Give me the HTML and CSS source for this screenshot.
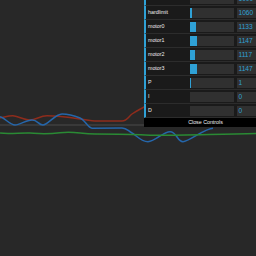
FILE: index.html
```html
<!DOCTYPE html>
<html lang="en">
<head>
    <meta charset="UTF-8">
    <meta name="viewport" content="width=device-width, initial-scale=1.0">
    <title>Motor Tuning</title>
    <link rel="stylesheet" href="styles.css">
</head>
<body>
    <svg class="plot" width="256" height="256" viewBox="0 0 256 256">
        <line x1="0" y1="125" x2="144" y2="125" class="axis"/>
        <path class="trace red" d="M0,118 C5,117 9,115.5 13,115.7 S24,120 30,120 S40,115.7 47,115.7 S70,117.5 80,119 S92,121 97,121 L122,121 C127,121 129,116 132,114 S140,109 150,104"/>
        <path class="trace blue" d="M0,116.7 C5,118 10,125 15,125 S26,120 32,120 S38,125 43,125 S55,114 62,114 S75,116 80,118 S88,128 92,128.3 L122,128 C127,128 128,131 132,133 S141,141.7 148,141.7 S163,131.7 170,131.7 S177,141.7 183,141.7 S205,128.3 213,128.3"/>
        <path class="trace green" d="M0,133 C8,134.5 22,132.5 30,133 S45,134.5 60,132.7 S80,134 95,134 S130,134 145,135 S200,134.5 256,133.5"/>
    </svg>

    <div class="gui">
        <ul class="rows">
            <li class="cr"><span class="name">limit</span><div class="slider"><div class="fg" style="width:0%"></div></div><div class="value">1000</div></li>
            <li class="cr"><span class="name">hardlimit</span><div class="slider"><div class="fg" style="width:6%"></div></div><div class="value">1060</div></li>
            <li class="cr"><span class="name">motor0</span><div class="slider"><div class="fg" style="width:14%"></div></div><div class="value">1133</div></li>
            <li class="cr"><span class="name">motor1</span><div class="slider"><div class="fg" style="width:16%"></div></div><div class="value">1147</div></li>
            <li class="cr"><span class="name">motor2</span><div class="slider"><div class="fg" style="width:12%"></div></div><div class="value">1117</div></li>
            <li class="cr"><span class="name">motor3</span><div class="slider"><div class="fg" style="width:16%"></div></div><div class="value">1147</div></li>
            <li class="cr"><span class="name">P</span><div class="slider"><div class="fg" style="width:2%"></div></div><div class="value">1</div></li>
            <li class="cr"><span class="name">I</span><div class="slider"><div class="fg" style="width:0%"></div></div><div class="value">0</div></li>
            <li class="cr"><span class="name">D</span><div class="slider"><div class="fg" style="width:0%"></div></div><div class="value">0</div></li>
        </ul>
        <div class="close-button">Close Controls</div>
    </div>
</body>
</html>
```

FILE: styles.css
```css
body {
    margin: 0;
    padding: 0;
    background-color: #282828;
    font-family: "Liberation Sans", Arial, sans-serif;
    overflow: hidden;
}
.plot {
    display: block;
}
.axis {
    stroke: #4a4a4a;
    stroke-width: 1;
}
.trace {
    fill: none;
    stroke-width: 1.5;
}
.red {
    stroke: #8e2c1c;
}
.blue {
    stroke: #2566aa;
}
.green {
    stroke: #2a8a34;
}
.gui {
    position: absolute;
    top: -8px;
    left: 144px;
    width: 123px;
    font-size: 5.3px;
    color: #eee;
}
.rows {
    list-style: none;
    margin: 0;
    padding: 0;
}
.cr {
    display: flex;
    align-items: flex-start;
    height: 13px;
    border-bottom: 1px solid #2c2c2c;
    border-left: 2px solid #2fa1d6;
    background: #1a1a1a;
}
.name {
    width: 44px;
    padding-left: 2px;
    line-height: 13px;
}
.slider {
    width: 46px;
    height: 10px;
    margin-top: 2px;
    background: #303030;
}
.fg {
    height: 100%;
    background: #2fa1d6;
}
.value {
    width: 30px;
    height: 10px;
    margin-top: 2px;
    margin-left: 3px;
    padding-left: 2px;
    font-size: 6.6px;
    line-height: 10px;
    background: #303030;
    color: #2fa1d6;
}
.close-button {
    height: 9px;
    line-height: 9px;
    text-align: center;
    background: #000;
}
```
